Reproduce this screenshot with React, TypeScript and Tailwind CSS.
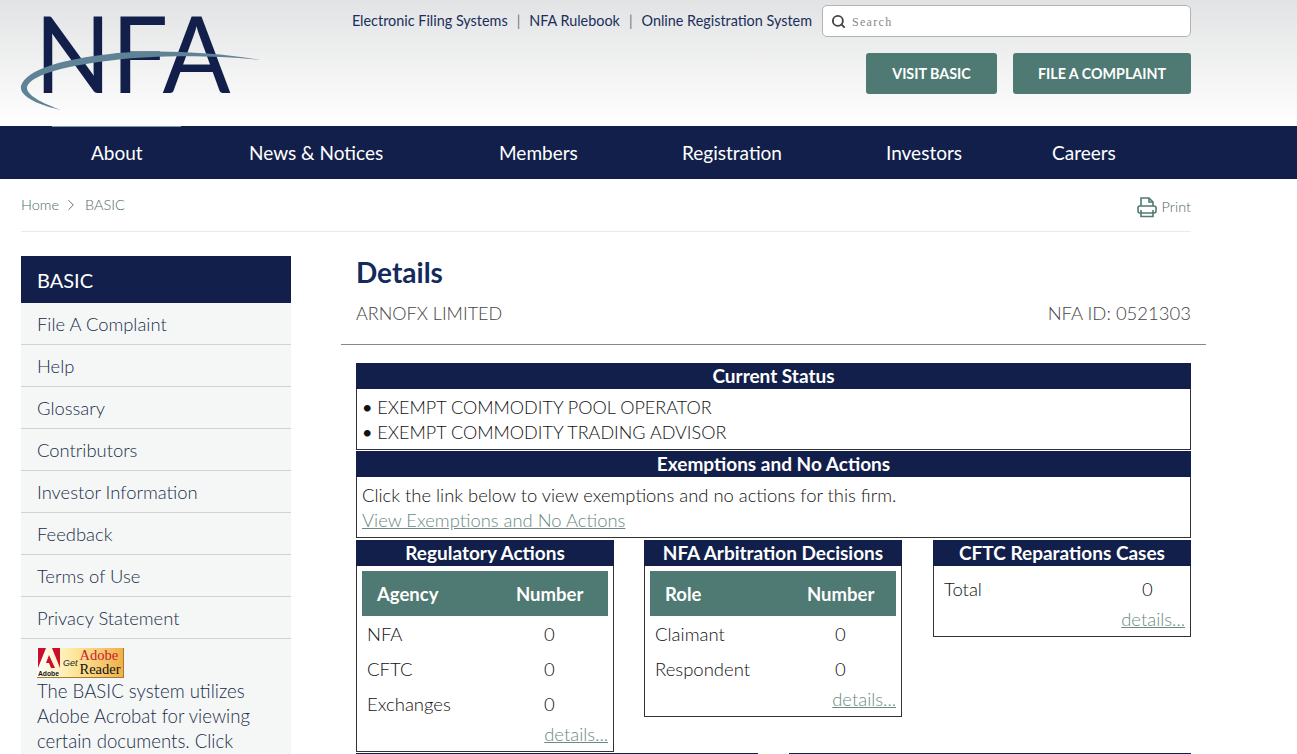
import { Search, ChevronRight } from 'lucide-react';

const navItems = [
  { label: 'About', width: 'w-[158px]' },
  { label: 'News & Notices', width: 'w-[250px]' },
  { label: 'Members', width: 'w-[183px]' },
  { label: 'Registration', width: 'w-[204px]' },
  { label: 'Investors', width: 'w-[166px]' },
  { label: 'Careers', width: 'w-[80px]' },
];

const sideLinks = ['File A Complaint', 'Help', 'Glossary', 'Contributors', 'Investor Information', 'Feedback', 'Terms of Use', 'Privacy Statement'];

function Logo() {
  return (
    <svg width="280" height="126" viewBox="0 0 280 126" className="block">
      <text x="34.5" y="93" fontFamily="Lato, sans-serif" fontWeight="400" fontSize="107" fill="#121f4b" textLength="196" lengthAdjust="spacingAndGlyphs">NFA</text>
      <path d="M261 60 C215 52 150 49 110 54 C65 59 26 69 21 86 C19 96 38 105 61 110 C42 103 26 95 27 87 C31 74 70 65 115 60 C155 55 215 55 261 60 Z" fill="#5f8296" />
    </svg>
  );
}

function PrintIcon() {
  return (
    <svg width="20" height="22" viewBox="0 0 20 22" fill="none" stroke="#4e7a73" strokeWidth="1.6" className="block">
      <path d="M4 10 V2 H12 L16 6 V10" />
      <path d="M12 2 V6 H16" />
      <rect x="1" y="10" width="18" height="7" rx="2" />
      <path d="M4 14 V20.5 H16 V14" />
    </svg>
  );
}

function AdobeBadge() {
  return (
    <div className="flex h-[30px] w-[87px] overflow-hidden bg-gradient-to-r from-white via-[#fdeaa0] via-40% to-[#f0b04a] border-r border-b border-[#a67c2c]">
      <div className="w-[24px] shrink-0 pl-[1px]">
        <svg width="23" height="29" viewBox="0 0 23 29" className="block">
          <path d="M0 0 H8 L0 20 Z M14 0 H22 V20 Z M11 7 L17 20 H13 L11 15 H8 Z" fill="#c8102e" />
          <text x="0" y="28" fontFamily="Liberation Sans, sans-serif" fontWeight="700" fontSize="7.5" fill="#111" textLength="21" lengthAdjust="spacingAndGlyphs">Adobe</text>
        </svg>
      </div>
      <span className="ml-[2px] mt-[11px] text-[9px] italic leading-none text-[#222] font-['Liberation_Sans',sans-serif]">Get</span>
      <div className="ml-[2px] flex flex-col items-start font-['Liberation_Serif',serif]">
        <span className="h-[14px] text-[14.5px] leading-[14px] text-[#c8202e]">Adobe</span>
        <span className="h-[14px] text-[14.5px] leading-[14px] text-[#111]">Reader</span>
      </div>
    </div>
  );
}

function Panel({ title, className, children }: { title: string; className?: string; children: React.ReactNode }) {
  return (
    <div className={`border border-[#333] ${className ?? ''}`}>
      <div className="-mx-[1px] -mt-[1px] h-[26px] bg-[#121f4b] text-center text-[19px] leading-[26px] font-bold text-white">{title}</div>
      {children}
    </div>
  );
}

function CountTable({ col, rows, labelWidth }: { col: string; rows: string[]; labelWidth: string }) {
  return (
    <div className="px-[5px] pt-[5px]">
      <div className="mb-[1px] flex h-[45px] items-center bg-[#4e7a73] pl-[15px] pt-[2px] text-[18.5px] font-bold text-white">
        <span className={labelWidth}>{col}</span>
        <span>Number</span>
      </div>
      {rows.map((row) => (
        <div key={row} className="flex h-[35px] items-center pl-[5px] text-[18.5px] font-light text-[#111]">
          <span className={labelWidth}>{row}</span>
          <span className="pl-[38px]">0</span>
        </div>
      ))}
      <div className="mt-[2px] mb-[7px] h-[20px] text-right text-[18.4px] font-light leading-[20px] text-[#6b8a85] underline">details...</div>
    </div>
  );
}

export default function App() {
  return (
    <div className="h-[754px] overflow-hidden bg-white font-['Lato',sans-serif] text-[#333]">
      <header className="relative h-[126px] bg-gradient-to-b from-[#e2e3e4] to-white">
        <div className="absolute left-0 top-0">
          <Logo />
        </div>
        <div className="flex w-[1191px] flex-col items-end pt-[5px]">
          <div className="flex items-center">
            <div className="flex items-center text-[14.4px] text-[#1b2f5c]">
              <span>Electronic Filing Systems</span>
              <span className="px-[9px] text-[#777]">|</span>
              <span>NFA Rulebook</span>
              <span className="px-[9px] text-[#777]">|</span>
              <span>Online Registration System</span>
            </div>
            <div className="ml-[10px] flex h-[32px] w-[369px] items-center rounded-[5px] border border-[#b3b3b3] bg-white pl-[8px]">
              <Search size={15} strokeWidth={3} className="text-[#444]" />
              <span className="ml-[6px] mt-[1px] font-['Liberation_Serif',serif] text-[12px] tracking-[1.3px] text-[#888]">Search</span>
            </div>
          </div>
          <div className="mt-[16px] flex gap-[16px]">
            <div className="flex h-[41px] w-[131px] items-center justify-center rounded-[3px] bg-[#4e7a73] text-[14.3px] font-bold text-white">VISIT BASIC</div>
            <div className="flex h-[41px] w-[178px] items-center justify-center rounded-[3px] bg-[#4e7a73] text-[14.3px] font-bold text-white">FILE A COMPLAINT</div>
          </div>
        </div>
      </header>
      <nav className="relative flex h-[53px] items-center bg-[#121f4b] pl-[91px] pt-[2px] text-[19px] text-white">
        <div className="absolute left-[52px] top-0 h-[1px] w-[129px] bg-[#7f9aa8]" />
        {navItems.map((item) => (
          <div key={item.label} className={item.width}>{item.label}</div>
        ))}
      </nav>
      <div className="ml-[21px] w-[1170px]">
        <div className="flex h-[53px] items-center justify-between border-b border-[#eaeaea] text-[14.5px] font-light text-[#4f6b66]">
          <div className="flex items-center">
            <span>Home</span>
            <ChevronRight size={18} strokeWidth={1.25} className="mx-[3px]" />
            <span className="ml-[2px]">BASIC</span>
          </div>
          <div className="flex items-center pt-[4px]">
            <PrintIcon />
            <span className="ml-[5px]">Print</span>
          </div>
        </div>
        <div className="mt-[24px] flex">
          <aside className="w-[270px] shrink-0 bg-[#f5f7f7]">
            <div className="flex h-[47px] items-center bg-[#121f4b] pl-[16px] text-[20px] text-white">BASIC</div>
            {sideLinks.map((link) => (
              <div key={link} className="flex h-[42px] items-center border-b border-[#d0d3d3] pl-[16px] pt-[2px] text-[18.4px] font-light text-[#1a2c48]">{link}</div>
            ))}
            <div className="px-[16px] pt-[9px] text-[18.6px] font-light leading-[25px] text-[#1a2c48]">
              <AdobeBadge />
              <p className="mt-[1px]">The BASIC system utilizes Adobe Acrobat for viewing certain documents. Click</p>
            </div>
          </aside>
          <main className="ml-[50px] w-[865px]">
            <div className="px-[15px]">
              <h1 className="text-[28px] font-bold leading-[32px] text-[#122b5c]">Details</h1>
              <div className="mt-[13px] flex justify-between text-[18px] font-light leading-[24px] text-[#444]">
                <span>ARNOFX LIMITED</span>
                <span className="text-[18.5px]">NFA ID: 0521303</span>
              </div>
            </div>
            <div className="mt-[19px] border-t border-[#888]" />
            <div className="px-[15px] pt-[18px] text-[18.4px] font-light text-[#111]">
              <Panel title="Current Status">
                <div className="h-[60px] px-[5px] pt-[6px] text-[18px] leading-[25px]">
                  <div><span className="font-normal">•</span> EXEMPT COMMODITY POOL OPERATOR</div>
                  <div><span className="font-normal">•</span> EXEMPT COMMODITY TRADING ADVISOR</div>
                </div>
              </Panel>
              <Panel title="Exemptions and No Actions" className="mt-[1px]">
                <div className="h-[60px] px-[5px] pt-[6px] leading-[25px]">
                  <div>Click the link below to view exemptions and no actions for this firm.</div>
                  <div className="text-[#6b8a85] underline">View Exemptions and No Actions</div>
                </div>
              </Panel>
              <div className="mt-[2px] flex items-start">
                <Panel title="Regulatory Actions" className="w-[258px]">
                  <CountTable col="Agency" rows={['NFA', 'CFTC', 'Exchanges']} labelWidth="w-[139px]" />
                </Panel>
                <Panel title="NFA Arbitration Decisions" className="ml-[30px] w-[258px]">
                  <CountTable col="Role" rows={['Claimant', 'Respondent']} labelWidth="w-[142px]" />
                </Panel>
                <Panel title="CFTC Reparations Cases" className="ml-[31px] w-[258px]">
                  <div className="px-[5px] pt-[6px]">
                    <div className="flex h-[35px] items-center pl-[5px] text-[18.5px]">
                      <span className="w-[198px]">Total</span>
                      <span>0</span>
                    </div>
                    <div className="mt-[2px] mb-[7px] h-[20px] text-right leading-[20px] text-[#6b8a85] underline">details...</div>
                  </div>
                </Panel>
              </div>
              <div className="mt-[1px] flex gap-[31px]">
                <div className="h-[26px] w-[402px] bg-[#121f4b]" />
                <div className="h-[26px] w-[402px] bg-[#121f4b]" />
              </div>
            </div>
          </main>
        </div>
      </div>
    </div>
  );
}
